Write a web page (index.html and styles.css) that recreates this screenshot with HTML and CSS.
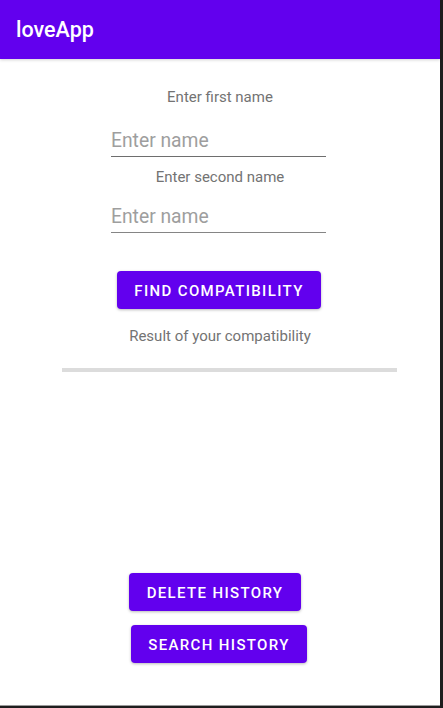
FILE: index.html
```html
<!DOCTYPE html>
<html>
<head>
<meta charset="utf-8">
<link rel="stylesheet" href="styles.css">
</head>
<body>
<div class="app">
  <header class="appbar">loveApp</header>
  <main class="content">
    <div class="label label-first">Enter first name</div>
    <div class="edit edit-first">Enter name</div>
    <div class="label label-second">Enter second name</div>
    <div class="edit edit-second">Enter name</div>
    <button class="btn btn-find">FIND COMPATIBILITY</button>
    <div class="label result">Result of your compatibility</div>
    <div class="bar"></div>
    <button class="btn btn-delete">DELETE HISTORY</button>
    <button class="btn btn-search">SEARCH HISTORY</button>
  </main>
</div>
</body>
</html>
```

FILE: styles.css
```css
html, body {
  margin: 0;
  padding: 0;
  background: #1e1e1e;
}
body {
  width: 443px;
  height: 708px;
  overflow: hidden;
  font-family: Roboto, "Liberation Sans", sans-serif;
}
.app {
  width: 440px;
  height: 706px;
  background: #ffffff;
  display: flex;
  flex-direction: column;
  border-bottom: 1px solid #9a9a9a;
  box-sizing: border-box;
}
.appbar {
  height: 59px;
  line-height: 60px;
  background: #6200ee;
  color: #ffffff;
  font-size: 21.5px;
  font-weight: 500;
  padding-left: 16px;
  box-shadow: 0 1px 3px rgba(0,0,0,0.18);
  flex: none;
  position: relative;
  z-index: 1;
}
.content {
  flex: 1;
  display: flex;
  flex-direction: column;
  align-items: center;
}
.label {
  font-size: 15px;
  line-height: 16px;
  color: #737373;
}
.label-first {
  margin-top: 30px;
}
.edit {
  align-self: flex-start;
  margin-left: 111px;
  width: 215px;
  font-size: 19.3px;
  line-height: 24px;
  color: #9e9e9e;
  padding-bottom: 3px;
  border-bottom: 1px solid #6e6e6e;
}
.edit-first {
  padding-top: 24px;
}
.label-second {
  margin-top: 12px;
}
.edit-second {
  padding-top: 20px;
  border-bottom-color: #858585;
}
.btn {
  font-family: Roboto, "Liberation Sans", sans-serif;
  background: #6200ee;
  color: #ffffff;
  border: none;
  border-radius: 4px;
  font-size: 15px;
  font-weight: 500;
  letter-spacing: 1.35px;
  height: 38px;
  padding: 2px 0 0 0;
  box-shadow: 0 1px 3px rgba(0,0,0,0.28);
  flex: none;
}
.btn-find {
  margin-top: 38px;
  margin-right: 2px;
  width: 204px;
}
.result {
  margin-top: 19px;
}
.bar {
  align-self: flex-start;
  margin-left: 62px;
  margin-top: 24px;
  width: 335px;
  height: 4px;
  background: #dcdcdc;
}
.btn-delete {
  margin-top: auto;
  align-self: flex-start;
  margin-left: 129px;
  width: 172px;
}
.btn-search {
  margin-top: 14px;
  align-self: flex-start;
  margin-left: 131px;
  width: 176px;
  margin-bottom: 42px;
}
```
